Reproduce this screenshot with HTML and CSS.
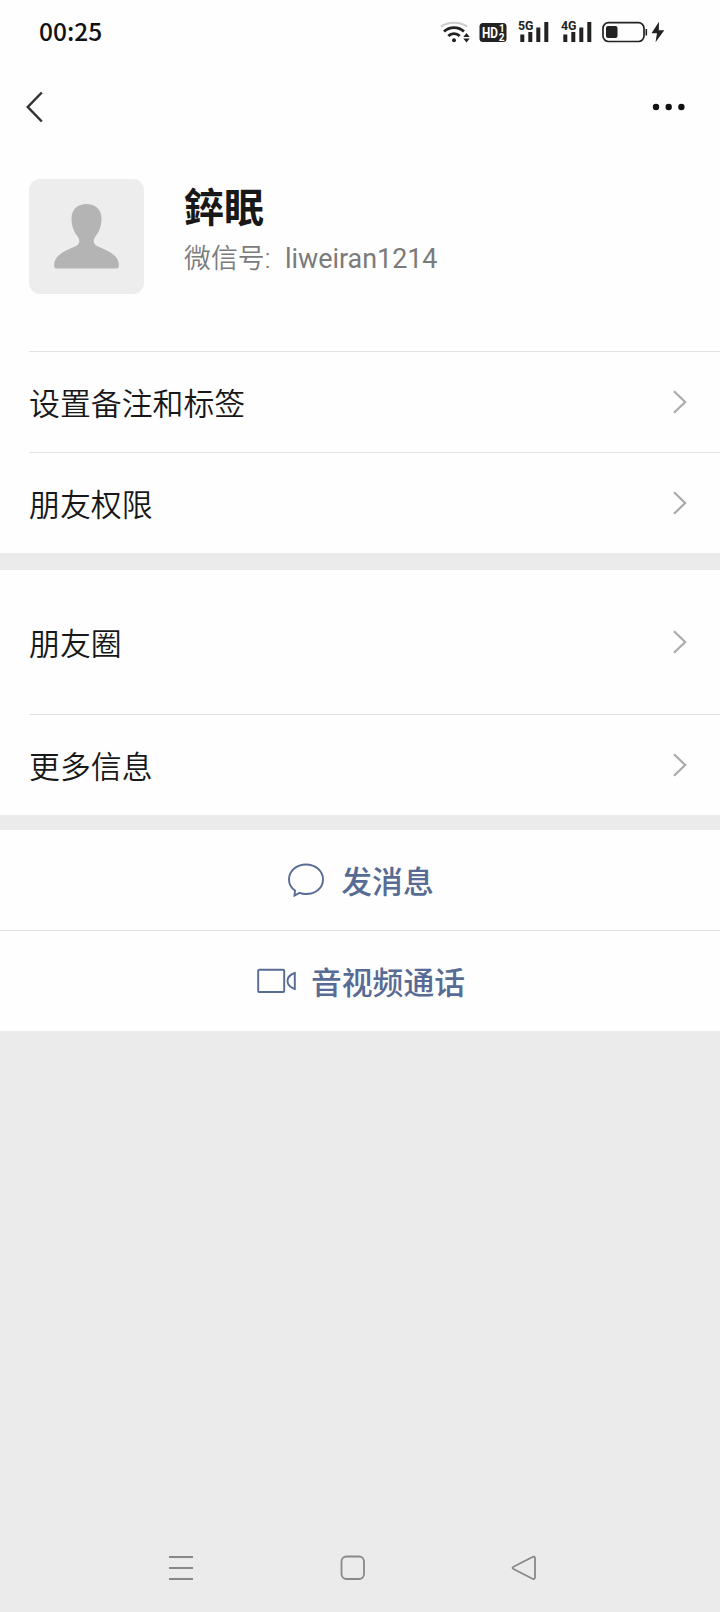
FILE: index.html
```html
<!DOCTYPE html>
<html lang="zh-CN">
<head>
    <meta charset="UTF-8">
    <meta name="viewport" content="width=device-width, initial-scale=1.0">
    <title>錊眠</title>
    <link rel="stylesheet" href="styles.css">
</head>
<body>
    <div class="phone">
        <header class="top">
            <div class="status-bar">
                <span class="time">00:25</span>
                <div class="status-icons">
                    <svg class="wifi" width="32" height="24" viewBox="0 0 32 24" fill="none">
                        <path d="M2 6.5C9 1.5 21 1.5 28 6.5" stroke="#ccc" stroke-width="2.2"/>
                        <path d="M5 11.6C10.5 6.4 19.5 6.4 25 11.6" stroke="#222" stroke-width="2.8"/>
                        <path d="M9.3 16C12.5 12.8 17.5 12.8 20.7 16" stroke="#222" stroke-width="2.8"/>
                        <circle cx="15" cy="20.3" r="2" fill="#222"/>
                        <path d="M24.3 17L27.5 13L30.7 17ZM24.3 18.6L27.5 22.6L30.7 18.6Z" fill="#222"/>
                    </svg>
                    <svg class="hd" width="28" height="24" viewBox="0 0 28 24">
                        <rect x="0.5" y="3" width="27" height="19" rx="3.5" fill="#222"/>
                        <text x="3" y="17.8" font-size="14.5" textLength="16" lengthAdjust="spacingAndGlyphs" fill="#fff">HD</text>
                        <text x="20" y="12.2" font-size="10" fill="#fff">1</text>
                        <text x="19.8" y="20.6" font-size="10" fill="#fff">2</text>
                    </svg>
                    <svg class="signal" width="32" height="24" viewBox="0 0 32 24">
                        <text x="0" y="10.4" font-size="13.5" textLength="15.5" lengthAdjust="spacingAndGlyphs">5G</text>
                        <path d="M2.3 14.5H6.3V22H2.3ZM10.3 12H14.3V22H10.3ZM18.3 7.5H22.3V22H18.3ZM26.3 2H30.3V22H26.3Z"/>
                    </svg>
                    <svg class="signal" width="32" height="24" viewBox="0 0 32 24">
                        <text x="0" y="10.4" font-size="13.5" textLength="15.5" lengthAdjust="spacingAndGlyphs">4G</text>
                        <path d="M2.3 14.5H6.3V22H2.3ZM10.3 12H14.3V22H10.3ZM18.3 7.5H22.3V22H18.3ZM26.3 2H30.3V22H26.3Z"/>
                    </svg>
                    <svg class="battery" width="46" height="24" viewBox="0 0 46 24">
                        <rect x="1" y="2.7" width="41" height="18.8" rx="5.5" fill="none" stroke="#222" stroke-width="1.7"/>
                        <rect x="4" y="6" width="11.5" height="12" rx="2" fill="#222"/>
                        <path d="M44.3 9V15.5" stroke="#222" stroke-width="1.6"/>
                    </svg>
                    <svg class="bolt" width="14" height="24" viewBox="0 0 14 24">
                        <path d="M8 1.8L0.5 13.2H6L4.5 22.3L13.3 10.2H7.8Z" fill="#222"/>
                    </svg>
                </div>
            </div>
            <nav class="nav">
                <svg width="18" height="32" viewBox="0 0 18 32" fill="none">
                    <path d="M16.8 1.5L2.800 16L16.800 30.5" stroke="#333" stroke-width="2.5"/>
                </svg>
                <svg width="34" height="8" viewBox="0 0 34 8" fill="#111">
                    <circle cx="4" cy="4" r="3.2"/>
                    <circle cx="16.7" cy="4" r="3.2"/>
                    <circle cx="29.4" cy="4" r="3.2"/>
                </svg>
            </nav>
        </header>

        <section class="profile">
            <div class="avatar">
                <svg width="66" height="66" viewBox="0 0 66 66">
                    <path d="M32.500 0C41 0 47.500 5 47.500 14.500C47.500 23 44.500 28.500 41 33C39 36 39 40 43 42C50 45 57 48 61.500 52.500C64.500 56 65 59 64.800 62.500Q64.800 64.500 62.800 64.500H2.200Q0.200 64.500 0.200 62.500C0 59 0.500 56 3.500 52.500C8 48 15 45 22 42C26 40 26 36 24 33C20.500 28.500 17.500 23 17.500 14.500C17.500 5 24 0 32.500 0Z" fill="#b4b4b4"/>
                </svg>
            </div>
            <div class="info">
                <h1 class="name">錊眠</h1>
                <p class="wechat-id">微信号: <span class="id-value">liweiran1214</span></p>
            </div>
        </section>

        <ul class="list">
            <li class="item">
                <span>设置备注和标签</span>
                <svg class="arrow" viewBox="0 0 14 24"><path d="M1 1.200L12.200 12L1 22.800"/></svg>
            </li>
            <li class="item">
                <span>朋友权限</span>
                <svg class="arrow" viewBox="0 0 14 24"><path d="M1 1.200L12.200 12L1 22.800"/></svg>
            </li>
        </ul>

        <ul class="list list-more">
            <li class="item moments">
                <span>朋友圈</span>
                <svg class="arrow" viewBox="0 0 14 24"><path d="M1 1.200L12.200 12L1 22.800"/></svg>
            </li>
            <li class="item">
                <span>更多信息</span>
                <svg class="arrow" viewBox="0 0 14 24"><path d="M1 1.200L12.200 12L1 22.800"/></svg>
            </li>
        </ul>

        <div class="actions">
            <div class="action">
                <svg width="36" height="34" viewBox="0 0 36 34">
                    <path d="M7 27.500C3 24.800 1 20.800 1 16.500C1 8 8.500 1.500 18 1.500S35 8 35 16.500S27.500 31 18 31C15.500 31 13.300 30.500 11.500 29.800L6.500 32.500Z"/>
                </svg>
                <span>发消息</span>
            </div>
            <div class="action video">
                <svg width="40" height="26" viewBox="0 0 40 26">
                    <rect x="1.200" y="1.800" width="26" height="22.200" rx="1"/>
                    <path d="M37.800 5V21C33.500 19.500 30.500 17 30.500 13S33.500 6.500 37.800 5Z"/>
                </svg>
                <span>音视频通话</span>
            </div>
        </div>

        <footer class="system-nav">
            <svg width="26" height="26" viewBox="0 0 26 26">
                <path d="M1 2H25M1 13H25M1 24H25"/>
            </svg>
            <svg width="26" height="26" viewBox="0 0 26 26">
                <rect x="1.500" y="1.500" width="22.500" height="22.500" rx="5"/>
            </svg>
            <svg width="26" height="26" viewBox="0 0 26 26">
                <path d="M2.500 11.700L21.500 2Q24 1 24 3.500V22Q24 24.800 21.500 23.700L2.500 14Q0.500 12.800 2.500 11.700Z"/>
            </svg>
        </footer>
    </div>
</body>
</html>
```
FILE: styles.css
```css
* {
    box-sizing: border-box;
}
body {
    margin: 0;
    background-color: #ebebeb;
    color: #181818;
    font-family: Roboto, "Noto Sans CJK SC", sans-serif;
}
.phone {
    width: 720px;
    height: 1612px;
    display: flex;
    flex-direction: column;
}
svg {
    display: block;
    flex-shrink: 0;
    overflow: visible;
}
.top {
    background-color: #fefefe;
}
.status-bar {
    height: 64px;
    padding: 0 54px 0 39px;
    display: flex;
    justify-content: space-between;
    align-items: center;
}
.time {
    padding-bottom: 3px;
    font-family: "Noto Sans CJK SC", sans-serif;
    font-size: 24.5px;
    font-weight: 500;
    color: #111;
}
.status-icons {
    display: flex;
    font-family: Roboto, sans-serif;
    font-weight: bold;
}
.hd {
    margin-left: 8px;
}
.signal {
    margin-left: 11px;
    fill: #222;
}
.battery {
    margin-left: 9px;
}
.bolt {
    margin-left: 3px;
    margin-right: 1px;
}
.nav {
    height: 86px;
    padding: 0 34px 0 25px;
    display: flex;
    justify-content: space-between;
    align-items: center;
}
.profile {
    height: 201px;
    padding: 29px 29px 0;
    display: flex;
    background-color: #fefefe;
}
.avatar {
    width: 115px;
    height: 115px;
    border-radius: 11px;
    background-color: #ededed;
    padding: 25px 0 0 25px;
}
.info {
    margin-left: 40px;
}
.name {
    margin: 5px 0 0;
    font-size: 40px;
    line-height: 50px;
    font-weight: bold;
}
.wechat-id {
    margin: 7px 0 0;
    font-size: 26.9px;
    line-height: 36px;
    font-weight: 350;
    color: #7b7b7b;
}
.id-value {
    margin-left: 8px;
    font-weight: 400;
}
.list {
    margin: 0;
    padding: 0 0 0 29px;
    list-style: none;
    background-color: #fefefe;
}
.list-more {
    margin-top: 17px;
}
.item {
    height: 101px;
    padding-right: 33px;
    display: flex;
    justify-content: space-between;
    align-items: center;
    border-top: 1px solid #e2e2e2;
    font-size: 30.9px;
    font-weight: 350;
}
.item span,
.action span {
    padding-bottom: 2px;
}
.moments {
    height: 144px;
    border-top: none;
}
.arrow {
    width: 14px;
    height: 24px;
    fill: none;
    stroke: #aaa;
    stroke-width: 2.2;
}
.actions {
    margin-top: 15px;
    background-color: #fefefe;
}
.action {
    height: 100px;
    padding-left: 2px;
    display: flex;
    justify-content: center;
    align-items: center;
    gap: 17px;
    color: #576b95;
    font-size: 30.8px;
    font-weight: 500;
}
.action svg {
    fill: none;
    stroke: #576b95;
    stroke-width: 1.9;
}
.video {
    height: 101px;
    gap: 14px;
    border-top: 1px solid #e2e2e2;
}
.system-nav {
    margin-top: auto;
    height: 88px;
    padding: 0 183px 0 168px;
    display: flex;
    justify-content: space-between;
    align-items: center;
}
.system-nav svg {
    fill: none;
    stroke: #888;
    stroke-width: 1.8;
}
```
